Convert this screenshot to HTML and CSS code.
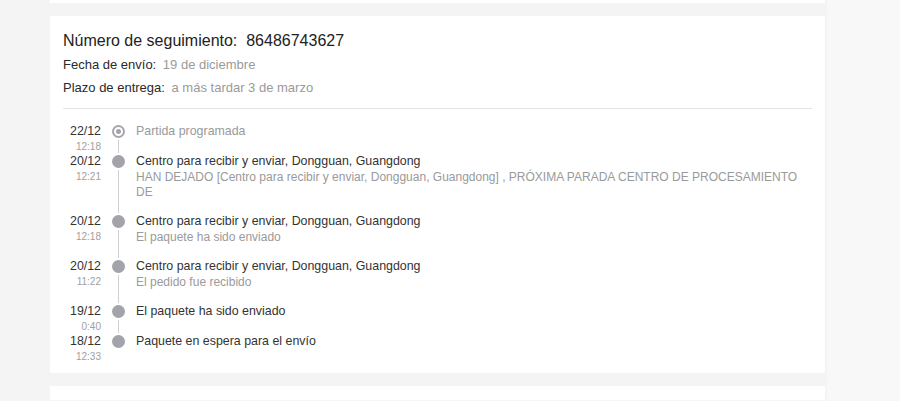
FILE: index.html
```html
<!DOCTYPE html>
<html lang="es">
<head>
<meta charset="utf-8">
<title>Seguimiento</title>
<link rel="stylesheet" href="styles.css">
</head>
<body>
<div class="page">
  <main class="main">
    <div class="card card-prev"></div>
    <section class="card">
      <h1 class="title">Número de seguimiento:&nbsp; 86486743627</h1>
      <div class="metas">
        <p class="meta"><span class="label">Fecha de envío:</span> <span class="value">19 de diciembre</span></p>
        <p class="meta"><span class="label">Plazo de entrega:</span> <span class="value">a más tardar 3 de marzo</span></p>
      </div>
      <hr class="divider">
      <ol class="timeline">
        <li class="item">
          <div class="when"><div class="date">22/12</div><div class="time">12:18</div></div>
          <div class="mark"><span class="ring"></span><span class="line"></span></div>
          <div class="what"><div class="event muted">Partida programada</div></div>
        </li>
        <li class="item">
          <div class="when"><div class="date">20/12</div><div class="time">12:21</div></div>
          <div class="mark"><span class="dot"></span><span class="line"></span></div>
          <div class="what">
            <div class="event">Centro para recibir y enviar, Dongguan, Guangdong</div>
            <div class="desc">HAN DEJADO [Centro para recibir y enviar, Dongguan, Guangdong] , PRÓXIMA PARADA CENTRO DE PROCESAMIENTO DE</div>
          </div>
        </li>
        <li class="item">
          <div class="when"><div class="date">20/12</div><div class="time">12:18</div></div>
          <div class="mark"><span class="dot"></span><span class="line"></span></div>
          <div class="what">
            <div class="event">Centro para recibir y enviar, Dongguan, Guangdong</div>
            <div class="desc">El paquete ha sido enviado</div>
          </div>
        </li>
        <li class="item">
          <div class="when"><div class="date">20/12</div><div class="time">11:22</div></div>
          <div class="mark"><span class="dot"></span><span class="line"></span></div>
          <div class="what">
            <div class="event">Centro para recibir y enviar, Dongguan, Guangdong</div>
            <div class="desc">El pedido fue recibido</div>
          </div>
        </li>
        <li class="item">
          <div class="when"><div class="date">19/12</div><div class="time">0:40</div></div>
          <div class="mark"><span class="dot"></span><span class="line"></span></div>
          <div class="what"><div class="event">El paquete ha sido enviado</div></div>
        </li>
        <li class="item">
          <div class="when"><div class="date">18/12</div><div class="time">12:33</div></div>
          <div class="mark"><span class="dot"></span></div>
          <div class="what"><div class="event">Paquete en espera para el envío</div></div>
        </li>
      </ol>
    </section>
    <div class="card card-next"></div>
  </main>
  <aside class="aside"></aside>
</div>
</body>
</html>
```
FILE: styles.css
```css
* { box-sizing: border-box; }
html, body { margin: 0; padding: 0; }
body {
  background: #f4f4f4;
  font-family: "Liberation Sans", Arial, sans-serif;
  color: #333;
  height: 401px;
  overflow: hidden;
}
.page {
  display: flex;
  height: 401px;
}
.main {
  width: 827px;
  padding-left: 50px;
  padding-right: 2px;
  display: flex;
  flex-direction: column;
  gap: 13px;
  margin-top: -13px;
}
.aside {
  flex: 1;
  background: #f8f8f8;
}
.card {
  flex: none;
  background: #fff;
  padding: 13px 13px 9px;
}
.card-prev { height: 16px; padding: 0; }
.card-next { height: 14px; padding: 0; }
.title {
  margin: 0;
  font-size: 16px;
  font-weight: normal;
  line-height: 23px;
  color: #222;
}
.metas { margin-top: 1px; }
.meta {
  margin: 0;
  font-size: 13px;
  line-height: 23px;
}
.label { color: #2a2a2a; }
.value { color: #9a9a9a; margin-left: 3px; }
.divider {
  border: 0;
  border-top: 1px solid #e4e4e4;
  margin: 9px 0 15px;
}
.timeline {
  list-style: none;
  margin: 0;
  padding: 0;
}
.item {
  display: grid;
  grid-template-columns: 38px 35px 1fr;
}
.when { text-align: right; }
.date { font-size: 12.4px; line-height: 15px; color: #333; }
.time { font-size: 10px; line-height: 15px; color: #a0a0a0; }
.mark {
  display: flex;
  flex-direction: column;
  align-items: center;
  padding-top: 1px;
}
.dot {
  width: 13px;
  height: 13px;
  border-radius: 50%;
  background: #a3a3ab;
  flex: none;
}
.ring {
  width: 13px;
  height: 13px;
  border-radius: 50%;
  border: 2px solid #a6a6ae;
  flex: none;
  display: flex;
  align-items: center;
  justify-content: center;
}
.ring::after {
  content: "";
  width: 5px;
  height: 5px;
  border-radius: 50%;
  background: #a3a3ab;
}
.line {
  flex: 1;
  width: 1px;
  background: #cfcfcf;
  margin: 2px 0 1px;
}
.event { font-size: 12.4px; line-height: 15px; color: #333; }
.event.muted { color: #9a9a9a; }
.desc {
  font-size: 12px;
  line-height: 15px;
  color: #9a9a9a;
  margin-top: 1px;
  margin-bottom: 14px;
}
```
